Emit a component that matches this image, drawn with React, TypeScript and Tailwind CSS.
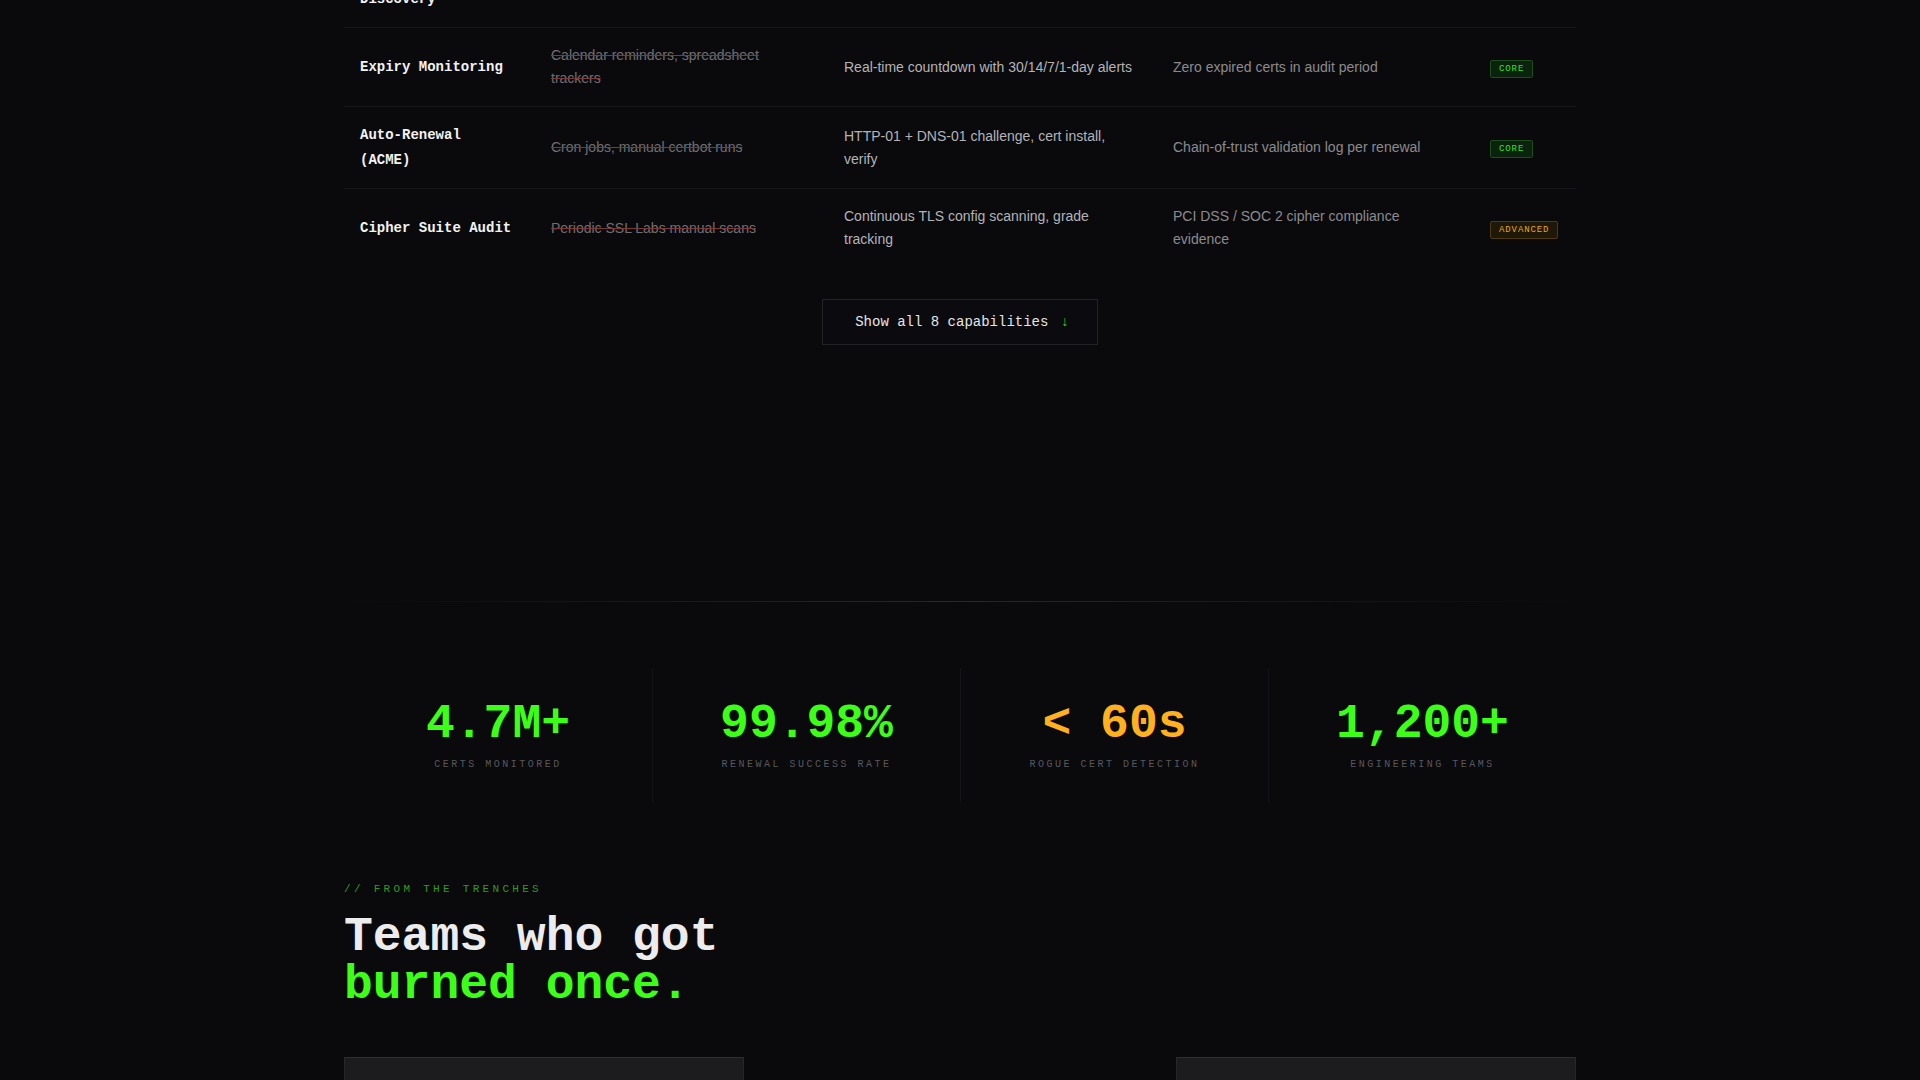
import React from 'react'

interface Capability {
  name: string[]
  before: string
  after: string
  proof: string
  tier: 'CORE' | 'ADVANCED'
}

const capabilities: Capability[] = [
  {
    name: ['Certificate', 'Discovery'],
    before: 'Manual inventory spreadsheets',
    after: 'Network-wide CT log and port scanning',
    proof: 'Full certificate inventory export',
    tier: 'CORE',
  },
  {
    name: ['Expiry Monitoring'],
    before: 'Calendar reminders, spreadsheet trackers',
    after: 'Real-time countdown with 30/14/7/1-day alerts',
    proof: 'Zero expired certs in audit period',
    tier: 'CORE',
  },
  {
    name: ['Auto-Renewal', '(ACME)'],
    before: 'Cron jobs, manual certbot runs',
    after: 'HTTP-01 + DNS-01 challenge, cert install, verify',
    proof: 'Chain-of-trust validation log per renewal',
    tier: 'CORE',
  },
  {
    name: ['Cipher Suite Audit'],
    before: 'Periodic SSL Labs manual scans',
    after: 'Continuous TLS config scanning, grade tracking',
    proof: 'PCI DSS / SOC 2 cipher compliance evidence',
    tier: 'ADVANCED',
  },
]

const stats = [
  { value: '4.7M+', label: 'CERTS MONITORED', amber: false },
  { value: '99.98%', label: 'RENEWAL SUCCESS RATE', amber: false },
  { value: '< 60s', label: 'ROGUE CERT DETECTION', amber: true },
  { value: '1,200+', label: 'ENGINEERING TEAMS', amber: false },
]

const mono = "font-['Liberation_Mono',monospace]"
const sans = "font-['Liberation_Sans',Arial,sans-serif]"

function TierBadge({ tier }: { tier: Capability['tier'] }) {
  const cls =
    tier === 'CORE'
      ? 'text-[#3ee01c] bg-[#0b230c] border-[#1d4d1a]'
      : 'text-[#e6a91f] bg-[#1f1707] border-[#4f3a0e]'
  return (
    <span
      className={`${mono} ${cls} inline-block border rounded-[2px] px-2 py-0.5 text-[9px] leading-3 tracking-[0.1em]`}
    >
      {tier}
    </span>
  )
}

function CapabilityRow({ cap, last }: { cap: Capability; last: boolean }) {
  return (
    <div
      className={`grid grid-cols-[191px_293px_329px_317px_1fr] items-center px-4 py-4 ${
        last ? '' : 'border-b border-[#16161b]'
      }`}
    >
      <div className={`${mono} pr-[36px] text-[14px] leading-[1.75] font-bold text-[#f2f2f2]`}>
        {cap.name.map((line) => (
          <div key={line}>{line}</div>
        ))}
      </div>
      <div
        className={`${sans} pr-[40px] text-[14px] leading-[1.65] text-[#6f6f72] line-through decoration-[#7d3838]`}
      >
        {cap.before}
      </div>
      <div className={`${sans} pr-[35px] text-[14px] leading-[1.65] text-[#b3b3b6]`}>{cap.after}</div>
      <div className={`${sans} pr-[40px] text-[14px] leading-[1.65] text-[#8a8a8e]`}>{cap.proof}</div>
      <div className="-mt-1">
        <TierBadge tier={cap.tier} />
      </div>
    </div>
  )
}

export default function App() {
  return (
    <div className="min-h-screen bg-[#0a0a0d] overflow-hidden">
      <div className="max-w-7xl mx-auto px-6">
        {/* Capabilities table (page is scrolled: first row sits above the fold) */}
        <section className="-mt-[54px] pb-64">
          <div>
            {capabilities.map((cap, i) => (
              <CapabilityRow key={cap.name.join(' ')} cap={cap} last={i === capabilities.length - 1} />
            ))}
          </div>
          <div className="flex justify-center mt-8">
            <button
              className={`${mono} flex items-center border border-[#222227] bg-[#0b0b0f] pl-8 pr-7 py-3 text-[14px] leading-5 text-[#e4e4e4]`}
            >
              Show all 8 capabilities
              <span className="ml-3 text-[#39d61a]">↓</span>
            </button>
          </div>
        </section>

        {/* Divider */}
        <div className="h-px bg-gradient-to-r from-transparent via-[#27272c] to-transparent" />

        {/* Stats */}
        <section className="mt-[66px] grid grid-cols-4">
          {stats.map((s, i) => (
            <div
              key={s.label}
              className={`flex flex-col items-center py-8 ${i > 0 ? 'border-l border-[#141418]' : ''}`}
            >
              <div
                className={`${mono} text-[48px] leading-none font-bold ${
                  s.amber ? 'text-[#ffb01f]' : 'text-[#3cff17]'
                }`}
              >
                {s.value}
              </div>
              <div className={`${mono} mt-3 text-[10px] leading-[10px] tracking-[0.25em] text-[#58585d]`}>
                {s.label}
              </div>
            </div>
          ))}
        </section>

        {/* Testimonials */}
        <section className="mt-[82px]">
          <div className={`${mono} text-[11px] leading-[11px] tracking-[0.3em] text-[#2f9a22]`}>
            // FROM THE TRENCHES
          </div>
          <h2 className={`${mono} mt-[18px] text-[48px] leading-none font-bold`}>
            <span className="block text-[#ececec]">Teams who got</span>
            <span className="block text-[#3cff17]">burned once.</span>
          </h2>
          <div className="mt-12 grid grid-cols-3 gap-4 pb-16">
            <div className="h-64 bg-[#1c1c1f] border border-[#27272b] border-t-[#303035]" />
            <div className="mt-16 h-64 bg-[#1c1c1f] border border-[#27272b] border-t-[#303035]" />
            <div className="h-64 bg-[#1c1c1f] border border-[#27272b] border-t-[#303035]" />
          </div>
        </section>
      </div>
    </div>
  )
}
